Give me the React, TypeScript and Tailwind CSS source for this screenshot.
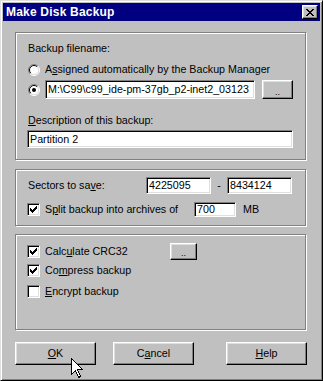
import React from "react";

const sunken =
  "border border-t-[#808080] border-l-[#808080] border-r-white border-b-white shadow-[inset_1px_1px_0_#000,inset_-1px_-1px_0_#dfdfdf] bg-white";
const raised =
  "border border-t-white border-l-white border-r-black border-b-black shadow-[inset_-1px_-1px_0_#808080,inset_1px_1px_0_#dfdfdf] bg-[#c0c0c0]";
const etched =
  "border border-[#808080] shadow-[inset_1px_1px_0_#fff,1px_1px_0_#fff]";

const Radio = ({ checked }: { checked?: boolean }) => (
  <svg width="12" height="12" viewBox="0 0 12 12" className="shrink-0">
    <circle cx="6" cy="6" r="5" fill="#fff" />
    <path d="M2.1 9.9 A5.5 5.5 0 0 1 9.9 2.1" stroke="#808080" fill="none" />
    <path d="M9.9 2.1 A5.5 5.5 0 0 1 2.1 9.9" stroke="#fff" fill="none" />
    <path d="M2.8 9.2 A4.5 4.5 0 0 1 9.2 2.8" stroke="#000" fill="none" />
    <path d="M9.2 2.8 A4.5 4.5 0 0 1 2.8 9.2" stroke="#dfdfdf" fill="none" />
    {checked && <circle cx="6" cy="6" r="2" fill="#000" />}
  </svg>
);

const checkPixels = [
  [6, 0],
  [5, 1], [6, 1],
  [0, 2], [4, 2], [5, 2], [6, 2],
  [0, 3], [1, 3], [3, 3], [4, 3], [5, 3],
  [0, 4], [1, 4], [2, 4], [3, 4], [4, 4],
  [1, 5], [2, 5], [3, 5],
  [2, 6],
];

const Checkbox = ({ checked }: { checked?: boolean }) => (
  <div className={`${sunken} w-[13px] h-[13px] shrink-0 flex items-center justify-center`}>
    {checked && (
      <svg width="7" height="7" viewBox="0 0 7 7" shapeRendering="crispEdges">
        {checkPixels.map(([x, y]) => (
          <rect key={`${x}-${y}`} x={x} y={y} width="1" height="1" fill="#000" />
        ))}
      </svg>
    )}
  </div>
);

const Field = ({ value, className }: { value: string; className: string }) => (
  <div className={`${sunken} ${className} flex items-center pl-[2px] overflow-hidden whitespace-nowrap`}>
    {value}
  </div>
);

const DotsButton = ({ className }: { className: string }) => (
  <div className={`${raised} ${className} flex items-end justify-center pb-[1px] text-[9px] leading-[9px]`}>
    ..
  </div>
);

const Key = ({ children }: { children: React.ReactNode }) => (
  <span className="underline underline-offset-[1px]">{children}</span>
);

const Cursor = () => (
  <svg
    width="13"
    height="21"
    viewBox="0 0 13 21"
    className="absolute left-[70px] top-[357px]"
    shapeRendering="crispEdges"
  >
    <path
      d="M0.5 0.5 L0.5 16.5 L4.5 12.5 L7.5 19.5 L9.5 18.5 L6.5 11.5 L11.5 11.5 Z"
      fill="#fff"
      stroke="#000"
    />
  </svg>
);

const App = () => {
  return (
    <div className="w-[323px] h-[381px] relative bg-[#c0c0c0] border border-t-[#dfdfdf] border-l-[#dfdfdf] border-r-black border-b-black shadow-[inset_1px_1px_0_#fff,inset_-1px_-1px_0_#808080] p-[2px] font-['Liberation_Sans',Arial,sans-serif] text-[10.7px] leading-[13px] text-black">
      {/* title bar */}
      <div className="h-[18px] bg-[#000080] flex items-center justify-between pl-[3px] pr-[2px]">
        <span className="text-white font-bold text-[12px] leading-[14px] tracking-[0.2px]">
          Make Disk Backup
        </span>
        <div className={`${raised} w-[16px] h-[14px] flex items-center justify-center`}>
          <svg width="8" height="7" viewBox="0 0 8 7" shapeRendering="crispEdges">
            <path
              d="M0 0h2v1h-2zM6 0h2v1h-2zM1 1h2v1h-2zM5 1h2v1h-2zM2 2h4v1h-4zM3 3h2v1h-2zM2 4h4v1h-4zM1 5h2v1h-2zM5 5h2v1h-2zM0 6h2v1h-2zM6 6h2v1h-2z"
              fill="#000"
            />
          </svg>
        </div>
      </div>

      <div className="pl-[12px] flex flex-col">
        {/* filename group */}
        <div className={`${etched} mt-[11px] w-[291px] h-[128px] pl-[11px] pt-[9px] flex flex-col`}>
          <div className="ml-[1px]">Backup filename:</div>
          <div className="mt-[8px] h-[13px] flex items-center">
            <div className="ml-[1px]">
              <Radio />
            </div>
            <span className="ml-[5px]">
              A<Key>s</Key>signed automatically by the Backup Manager
            </span>
          </div>
          <div className="mt-[4px] flex items-center">
            <div className="ml-[1px]">
              <Radio checked />
            </div>
            <Field
              value="M:\C99\c99_ide-pm-37gb_p2-inet2_03123"
              className="ml-[5px] w-[210px] h-[19px]"
            />
            <DotsButton className="ml-[7px] w-[31px] h-[19px]" />
          </div>
          <div className="mt-[15px] ml-[1px]">
            <Key>D</Key>escription of this backup:
          </div>
          <Field value="Partition 2" className="mt-[3px] w-[266px] h-[18px]" />
        </div>

        {/* sectors group */}
        <div className={`${etched} mt-[9px] w-[291px] h-[57px] pl-[11px] pt-[7px] flex flex-col`}>
          <div className="h-[17px] flex items-center">
            <span className="w-[119px] pl-[1px]">
              Sectors to sa<Key>v</Key>e:
            </span>
            <Field value="4225095" className="w-[65px] h-[17px]" />
            <span className="w-[16px] text-center">-</span>
            <Field value="8434124" className="w-[65px] h-[17px]" />
          </div>
          <div className="mt-[8px] h-[15px] flex items-center">
            <Checkbox checked />
            <span className="ml-[5px] w-[149px]">
              S<Key>p</Key>lit backup into archives of
            </span>
            <Field value="700" className="w-[42px] h-[15px]" />
            <span className="ml-[7px]">MB</span>
          </div>
        </div>

        {/* options group */}
        <div className={`${etched} mt-[8px] w-[291px] h-[96px] pl-[11px] pt-[8px] flex flex-col`}>
          <div className="h-[17px] flex items-center">
            <Checkbox checked />
            <span className="ml-[5px] w-[125px]">
              Calc<Key>u</Key>late CRC32
            </span>
            <DotsButton className="w-[27px] h-[17px]" />
          </div>
          <div className="mt-[4px] h-[13px] flex items-center">
            <Checkbox checked />
            <span className="ml-[5px]">
              Co<Key>m</Key>press backup
            </span>
          </div>
          <div className="mt-[8px] h-[13px] flex items-center">
            <Checkbox />
            <span className="ml-[5px]">
              <Key>E</Key>ncrypt backup
            </span>
          </div>
        </div>

        {/* buttons */}
        <div className="mt-[12px] w-[292px] flex">
          <div className={`${raised} w-[81px] h-[23px] flex items-center justify-center`}>
            <span>
              <Key>O</Key>K
            </span>
          </div>
          <div className={`${raised} ml-[17px] w-[81px] h-[23px] flex items-center justify-center`}>
            <span>
              C<Key>a</Key>ncel
            </span>
          </div>
          <div className={`${raised} ml-auto w-[81px] h-[23px] flex items-center justify-center`}>
            <span>
              <Key>H</Key>elp
            </span>
          </div>
        </div>
      </div>

      <Cursor />
    </div>
  );
};

export default App;
